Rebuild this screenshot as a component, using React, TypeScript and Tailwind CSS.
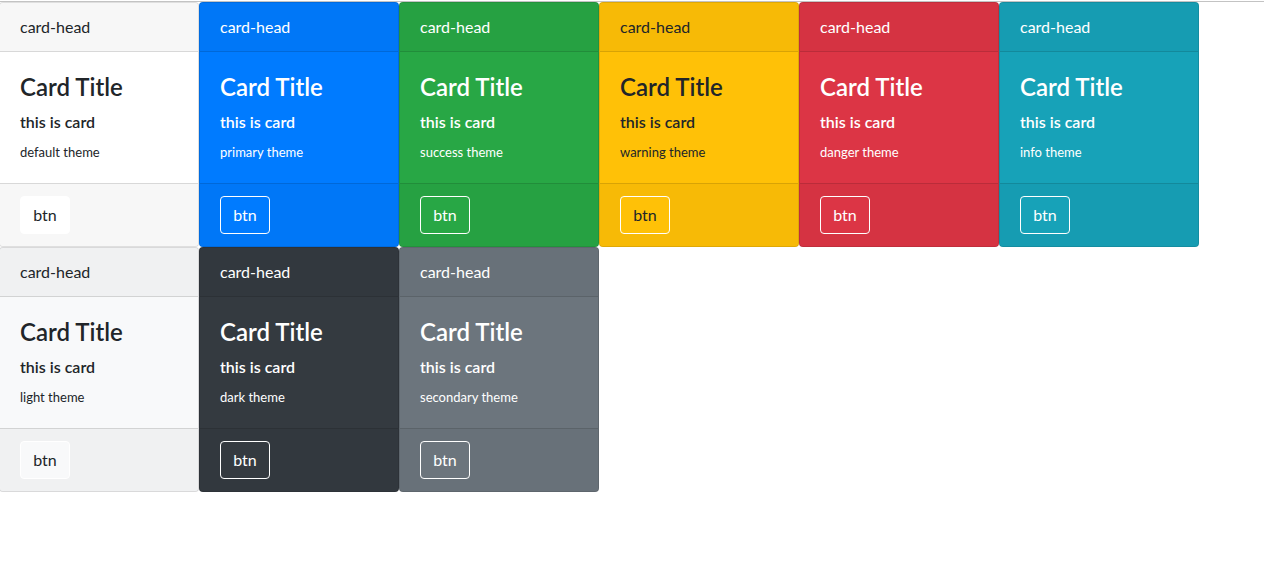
type Theme = {
  name: string;
  card: string;
  btn: string;
  text: string;
};

const themes: Theme[] = [
  { name: 'default', card: 'bg-white', btn: 'bg-white', text: 'text-[#212529]' },
  { name: 'primary', card: 'bg-[#007bff]', btn: 'bg-[#007bff]', text: 'text-white' },
  { name: 'success', card: 'bg-[#28a745]', btn: 'bg-[#28a745]', text: 'text-white' },
  { name: 'warning', card: 'bg-[#ffc107]', btn: 'bg-[#ffc107]', text: 'text-[#212529]' },
  { name: 'danger', card: 'bg-[#dc3545]', btn: 'bg-[#dc3545]', text: 'text-white' },
  { name: 'info', card: 'bg-[#17a2b8]', btn: 'bg-[#17a2b8]', text: 'text-white' },
  { name: 'light', card: 'bg-[#f8f9fa]', btn: 'bg-[#f8f9fa]', text: 'text-[#212529]' },
  { name: 'dark', card: 'bg-[#343a40]', btn: 'bg-[#343a40]', text: 'text-white' },
  { name: 'secondary', card: 'bg-[#6c757d]', btn: 'bg-[#6c757d]', text: 'text-white' },
];

function Card({ theme }: { theme: Theme }) {
  return (
    <div
      className={`w-[200px] flex flex-col border border-black/[0.125] rounded ${theme.card} ${theme.text}`}
    >
      <div className="h-[49px] px-5 flex items-center bg-black/[0.03] border-b border-black/[0.125] text-base rounded-t">
        card-head
      </div>
      <div className="h-[131px] px-5 pt-5">
        <h4 className="text-2xl font-semibold leading-[29px] mb-[11px]">Card Title</h4>
        <h6 className="text-base font-semibold leading-[19px] mb-3">this is card</h6>
        <p className="text-[13px] leading-[19px]">{theme.name} theme</p>
      </div>
      <div className="px-5 pt-3 pb-3 flex items-center bg-black/[0.03] border-t border-black/[0.125] rounded-b">
        <button className={`h-[38px] w-[50px] rounded border border-white text-base ${theme.btn}`}>
          btn
        </button>
      </div>
    </div>
  );
}

export default function App() {
  return (
    <div className="min-h-[565px] bg-white font-['Lato',sans-serif]">
      <div className="h-px mt-px bg-[#c3c3c3]" />
      <div className="flex flex-wrap -ml-px">
        {themes.map((t) => (
          <Card key={t.name} theme={t} />
        ))}
      </div>
    </div>
  );
}
